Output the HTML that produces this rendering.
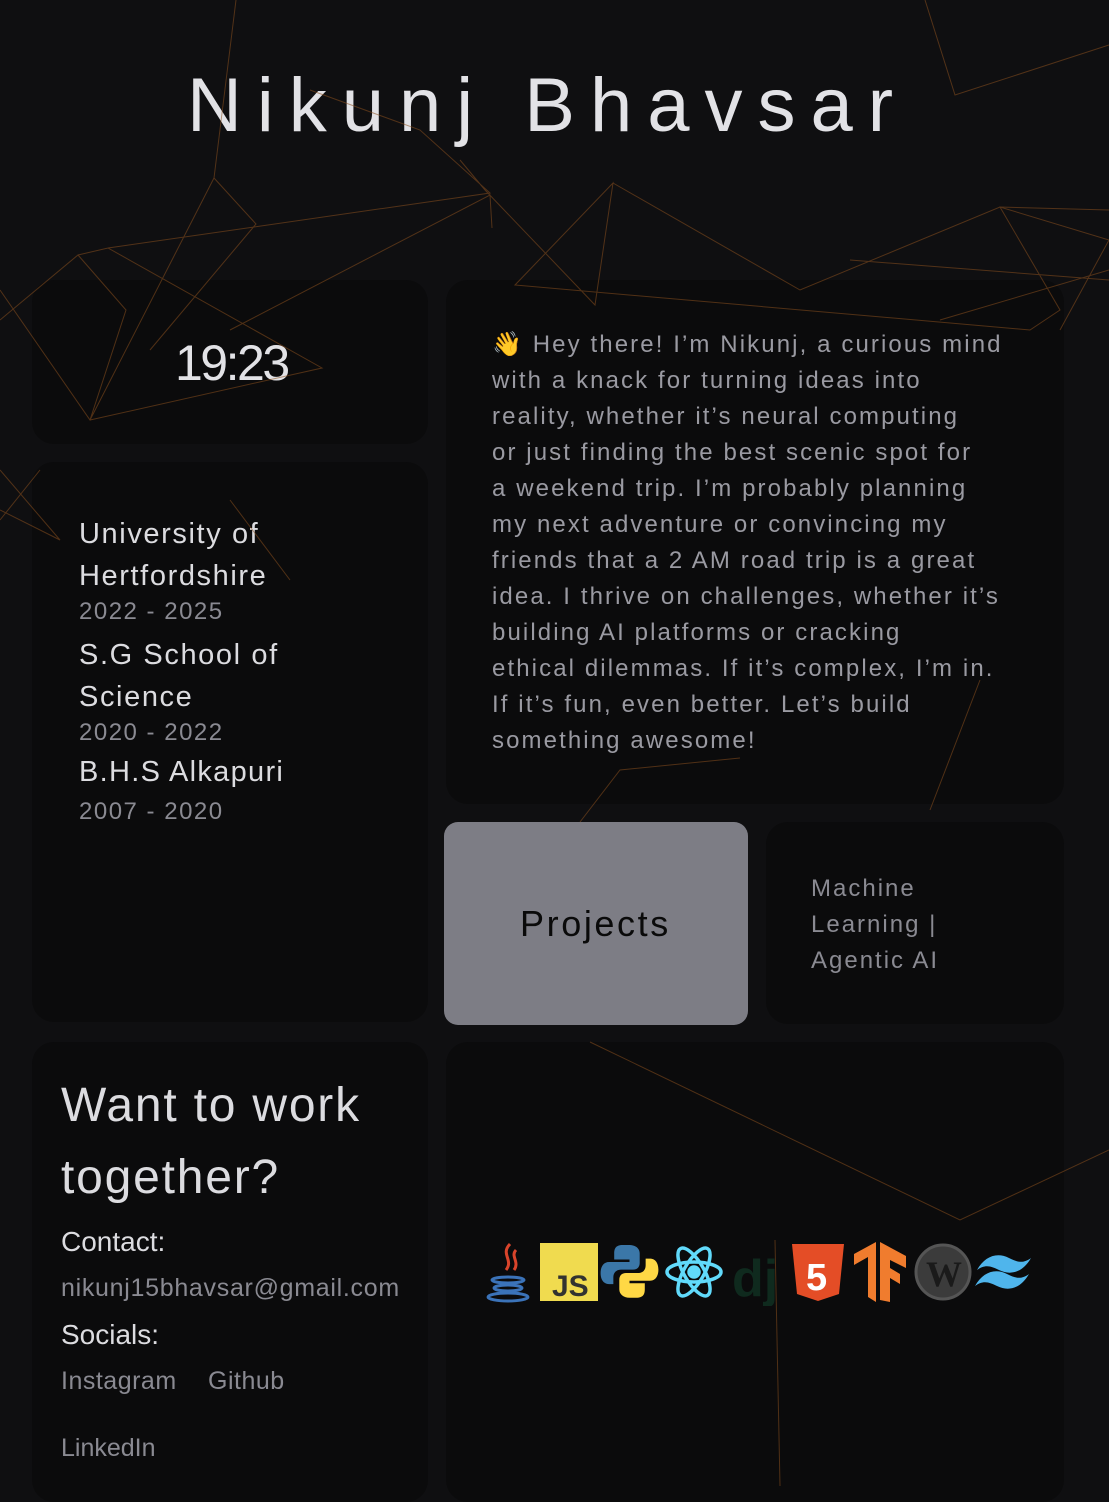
<!DOCTYPE html>
<html><head><meta charset="utf-8"><style>
*{margin:0;padding:0;box-sizing:border-box}
body{width:1109px;height:1486px;background:#0f0f11;overflow:hidden;position:relative;font-family:"Liberation Sans",sans-serif;color:#dcdce0}
.card{position:absolute;background:#0b0b0c;border-radius:22px}
.abs{position:absolute;white-space:nowrap}
svg.bg{position:absolute;left:0;top:0;z-index:5;pointer-events:none}
</style></head><body>
<div class="card" style="left:32px;top:280px;width:396px;height:164px"></div>
<div class="card" style="left:32px;top:462px;width:396px;height:560px"></div>
<div class="card" style="left:446px;top:280px;width:618px;height:524px"></div>
<div class="card" style="left:444px;top:822px;width:304px;height:203px;background:#7d7d85;border-radius:14px"></div>
<div class="card" style="left:766px;top:822px;width:298px;height:202px"></div>
<div class="card" style="left:32px;top:1042px;width:396px;height:460px"></div>
<div class="card" style="left:446px;top:1042px;width:618px;height:460px"></div>

<div class="abs" style="left:187px;top:62px;font-size:76px;letter-spacing:15px;color:#e2e2e6">Nikunj Bhavsar</div>
<div class="abs" style="left:175px;top:334px;font-size:50px;letter-spacing:-2.5px;color:#e2e2e6">19:23</div>

<div class="abs" style="left:79px;top:513px;font-size:29px;line-height:42px;letter-spacing:1.6px;color:#dcdce0">University of<br>Hertfordshire</div>
<div class="abs" style="left:79px;top:598px;font-size:24px;letter-spacing:1.5px;color:#8a8a92">2022 - 2025</div>
<div class="abs" style="left:79px;top:634px;font-size:29px;line-height:42px;letter-spacing:1.6px;color:#dcdce0">S.G School of<br>Science</div>
<div class="abs" style="left:79px;top:719px;font-size:24px;letter-spacing:1.5px;color:#8a8a92">2020 - 2022</div>
<div class="abs" style="left:79px;top:756px;font-size:29px;letter-spacing:1.3px;color:#dcdce0">B.H.S Alkapuri</div>
<div class="abs" style="left:79px;top:798px;font-size:24px;letter-spacing:1.5px;color:#8a8a92">2007 - 2020</div>

<div class="abs" style="left:492px;top:327px;font-size:24px;line-height:36px;letter-spacing:2.1px;color:#9a9aa2">👋 Hey there! I’m Nikunj, a curious mind<br>with a knack for turning ideas into<br>reality, whether it’s neural computing<br>or just finding the best scenic spot for<br>a weekend trip. I’m probably planning<br>my next adventure or convincing my<br>friends that a 2 AM road trip is a great<br>idea. I thrive on challenges, whether it’s<br>building AI platforms or cracking<br>ethical dilemmas. If it’s complex, I’m in.<br>If it’s fun, even better. Let’s build<br>something awesome!</div>

<div class="abs" style="left:520px;top:903px;font-size:36px;letter-spacing:2.6px;color:#0a0a0a">Projects</div>
<div class="abs" style="left:811px;top:871px;font-size:24px;line-height:36px;letter-spacing:2px;color:#8a8a92">Machine<br>Learning |<br>Agentic AI</div>

<div class="abs" style="left:61px;top:1070px;font-size:48px;line-height:72px;letter-spacing:1.8px;color:#dcdce0">Want to work<br>together?</div>
<div class="abs" style="left:61px;top:1226px;font-size:28px;color:#dcdce0">Contact:</div>
<div class="abs" style="left:61px;top:1274px;font-size:25px;letter-spacing:0.7px;color:#8a8a92">nikunj15bhavsar@gmail.com</div>
<div class="abs" style="left:61px;top:1319px;font-size:28px;color:#dcdce0">Socials:</div>
<div class="abs" style="left:61px;top:1367px;font-size:25px;letter-spacing:0.5px;color:#8a8a92">Instagram</div>
<div class="abs" style="left:208px;top:1367px;font-size:25px;letter-spacing:0.5px;color:#8a8a92">Github</div>
<div class="abs" style="left:61px;top:1434px;font-size:25px;color:#8a8a92">LinkedIn</div>

<svg class="abs" style="left:480px;top:1240px" width="560" height="66" viewBox="0 0 560 66">
 <path d="M30 4 C20 14 34 20 26 30 M36 10 C30 16 40 22 34 30" stroke="#d9442b" stroke-width="3" fill="none"/>
 <ellipse cx="28" cy="40" rx="16" ry="3" fill="none" stroke="#3b73b9" stroke-width="3"/>
 <ellipse cx="28" cy="48" rx="14" ry="3" fill="none" stroke="#3b73b9" stroke-width="3"/>
 <ellipse cx="28" cy="57" rx="20" ry="4" fill="none" stroke="#3b73b9" stroke-width="3"/>
 <rect x="60" y="3" width="58" height="58" fill="#f0db4f"/>
 <text x="72" y="56" font-family="Liberation Sans" font-weight="bold" font-size="30" fill="#323330">JS</text>
 <g transform="translate(124,5) scale(0.85)">
 <path d="M30 0 h-8 c-8 0-10 4-10 10v7h18v3h-24c-7 0-10 6-10 13s3 13 10 13h5v-8c0-6 4-9 9-9h14c5 0 8-3 8-8v-11c0-6-5-10-12-10z" fill="#3b77a8"/>
 <path d="M30 62 h8 c8 0 10-4 10-10v-7h-18v-3h24c7 0 10-6 10-13s-3-13-10-13h-5v8c0 6-4 9-9 9h-14c-5 0-8 3-8 8v11c0 6 5 10 12 10z" fill="#ffd845"/>
 </g>
 <g transform="translate(214,32)" fill="none" stroke="#61dafb" stroke-width="3.5">
  <ellipse rx="27" ry="10"/><ellipse rx="27" ry="10" transform="rotate(60)"/><ellipse rx="27" ry="10" transform="rotate(120)"/>
  <circle r="5" fill="#61dafb"/>
 </g>
 <text x="252" y="56" font-family="Liberation Sans" font-weight="bold" font-size="52" fill="#0f2a1e">dj</text>
 <path d="M312 4h52l-5 50-21 7-21-7z" fill="#e44d26"/>
 <text x="326" y="50" font-family="Liberation Sans" font-weight="bold" font-size="38" fill="#fff">5</text>
 <path d="M374 14l22-12v60l-8-5v-40l-14 8z M400 2l26 14v12l-16-8v8l10 6v10l-10-6v24l-10-2z" fill="#f07c2e"/>
 <circle cx="463" cy="32" r="27" fill="#3b3b3b" stroke="#555" stroke-width="3"/>
 <text x="446" y="46" font-family="Liberation Serif" font-weight="bold" font-size="36" fill="#1a1a1a">W</text>
 <path d="M497 30 c8-14 20-18 32-12 c8 4 14 6 22 0 c-8 14-20 18-32 12 c-8-4-14-6-22 0z M495 46 c8-14 20-18 32-12 c8 4 14 6 22 0 c-8 14-20 18-32 12 c-8-4-14-6-22 0z" fill="#4fb5ec"/>
</svg>

<svg class="bg" width="1109" height="1486" fill="none" stroke="#8a4f1e" stroke-width="1" opacity="0.55">
 <path d="M236 0 L214 178 L90 420 L0 290 M0 320 L78 255 L126 310 L90 420 M78 255 L108 248 L322 368 L90 420 M108 248 L490 193 L420 130 L310 90 M214 178 L256 224 L150 350 M230 330 L490 195 L492 228 M460 160 L485 190 L595 305 L613 183 L515 285 L1030 330 L1060 310 L1000 207 L1109 210 M613 183 L800 290 L1000 207 L1109 240 L1060 330 M925 0 L955 95 L1109 45 M0 470 L60 540 L0 510 M940 320 L1109 270 M850 260 L1109 280 M580 822 L620 770 L740 758 M930 810 L980 680 M230 500 L290 580 M590 1042 L960 1220 L1109 1150 M775 1240 L780 1486 M0 520 L40 470"/>
</svg>
</body></html>
